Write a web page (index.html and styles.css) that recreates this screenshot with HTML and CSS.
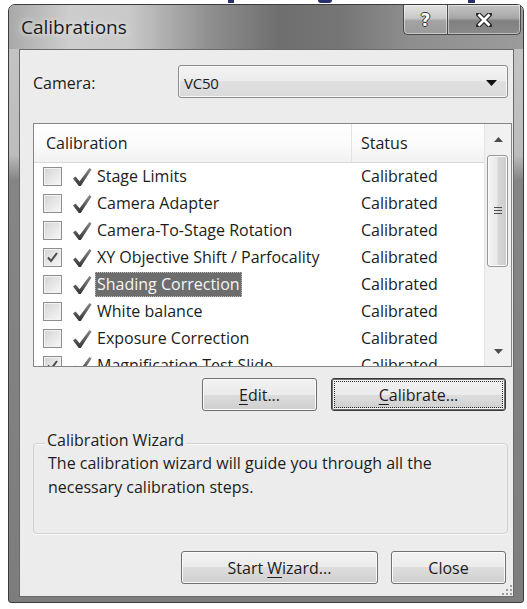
FILE: index.html
```html
<!DOCTYPE html>
<html lang="en">
<head>
<meta charset="utf-8">
<title>Calibrations</title>
<link rel="stylesheet" href="styles.css">
</head>
<body>
<div class="banner"><i class="m m1"></i><i class="m m2"></i><i class="m m3"></i></div>

<div class="window">
  <div class="titlebar">
    <span class="title">Calibrations</span>
    <div class="caption-btns">
      <span class="cb help">?</span>
      <span class="cb close">
        <svg width="16" height="14" viewBox="0 0 16 14"><path d="M2 1 L14 13 M14 1 L2 13" stroke="#2c2c2c" stroke-width="5" stroke-linecap="square"/><path d="M2.5 1.5 L13.5 12.5 M13.5 1.5 L2.5 12.5" stroke="#fff" stroke-width="2.6"/></svg>
      </span>
    </div>
  </div>

  <div class="client">
    <div class="camera-row">
      <span class="label">Camera:</span>
      <div class="combo">
        <span class="combo-text">VC50</span>
        <svg class="combo-arrow" width="11" height="6" viewBox="0 0 11 6"><path d="M0 0 H11 L5.5 6 Z" fill="#111"/></svg>
      </div>
    </div>

    <div class="list">
      <div class="list-main">
        <div class="list-head">
          <div class="hcell hcal">Calibration</div>
          <div class="hcell hstatus">Status</div>
        </div>
        <div class="rows">
          <div class="row">
            <div class="cell cal"><span class="box"></span><svg class="tick" viewBox="0 0 20 20"><use href="#tick"/></svg><span class="name">Stage Limits</span></div>
            <div class="cell status">Calibrated</div>
          </div>
          <div class="row">
            <div class="cell cal"><span class="box"></span><svg class="tick" viewBox="0 0 20 20"><use href="#tick"/></svg><span class="name">Camera Adapter</span></div>
            <div class="cell status">Calibrated</div>
          </div>
          <div class="row">
            <div class="cell cal"><span class="box"></span><svg class="tick" viewBox="0 0 20 20"><use href="#tick"/></svg><span class="name">Camera-To-Stage Rotation</span></div>
            <div class="cell status">Calibrated</div>
          </div>
          <div class="row">
            <div class="cell cal"><span class="box checked"><svg viewBox="0 0 13 13"><path d="M2 6.5 L5 10 L11 2" fill="none" stroke="#4a4a4a" stroke-width="2"/></svg></span><svg class="tick" viewBox="0 0 20 20"><use href="#tick"/></svg><span class="name">XY Objective Shift / Parfocality</span></div>
            <div class="cell status">Calibrated</div>
          </div>
          <div class="row">
            <div class="cell cal"><span class="box"></span><svg class="tick" viewBox="0 0 20 20"><use href="#tick"/></svg><span class="name selected">Shading Correction</span></div>
            <div class="cell status">Calibrated</div>
          </div>
          <div class="row">
            <div class="cell cal"><span class="box"></span><svg class="tick" viewBox="0 0 20 20"><use href="#tick"/></svg><span class="name">White balance</span></div>
            <div class="cell status">Calibrated</div>
          </div>
          <div class="row">
            <div class="cell cal"><span class="box"></span><svg class="tick" viewBox="0 0 20 20"><use href="#tick"/></svg><span class="name">Exposure Correction</span></div>
            <div class="cell status">Calibrated</div>
          </div>
          <div class="row">
            <div class="cell cal"><span class="box checked"><svg viewBox="0 0 13 13"><path d="M2 6.5 L5 10 L11 2" fill="none" stroke="#4a4a4a" stroke-width="2"/></svg></span><svg class="tick" viewBox="0 0 20 20"><use href="#tick"/></svg><span class="name">Magnification Test Slide</span></div>
            <div class="cell status">Calibrated</div>
          </div>
        </div>
      </div>
      <div class="vscroll">
        <div class="sb-arrow"><svg width="9" height="5" viewBox="0 0 9 5"><path d="M0 5 L4.5 0 L9 5 Z" fill="#4d4d4d"/></svg></div>
        <div class="sb-track">
          <div class="sb-thumb"><span class="grip-lines"></span></div>
        </div>
        <div class="sb-arrow"><svg width="9" height="5" viewBox="0 0 9 5"><path d="M0 0 L9 0 L4.5 5 Z" fill="#4d4d4d"/></svg></div>
      </div>
    </div>

    <div class="btn-row">
      <button class="btn w-small"><span class="btn-face"><u>E</u>dit...</span></button>
      <button class="btn default w-wide"><span class="btn-face focus"><u>C</u>alibrate...</span></button>
    </div>

    <div class="group">
      <span class="group-title">Calibration Wizard</span>
      <p class="group-text">The calibration wizard will guide you through all the necessary calibration steps.</p>
    </div>

    <div class="btn-row bottom">
      <button class="btn w-wizard"><span class="btn-face">Start <u>W</u>izard...</span></button>
      <button class="btn w-small"><span class="btn-face">Close</span></button>
    </div>

    <svg class="size-grip" width="10" height="10" viewBox="0 0 10 10">
      <g fill="#9a9a9a">
        <rect x="8" y="0" width="2" height="2"/>
        <rect x="4" y="4" width="2" height="2"/><rect x="8" y="4" width="2" height="2"/>
        <rect x="0" y="8" width="2" height="2"/><rect x="4" y="8" width="2" height="2"/><rect x="8" y="8" width="2" height="2"/>
      </g>
    </svg>
  </div>
</div>

<svg width="0" height="0" class="defs">
  <defs>
    <linearGradient id="tickfill" x1="0" y1="0" x2="0" y2="1">
      <stop offset="0" stop-color="#8a8a8a"/>
      <stop offset="1" stop-color="#333"/>
    </linearGradient>
    <symbol id="tick" viewBox="0 0 20 20">
      <path d="M1 11.5 L3.6 9.6 L7.6 14.2 L17.4 1 L19.6 2.4 L8.8 19 L6.8 19 Z" fill="url(#tickfill)"/>
    </symbol>
  </defs>
</svg>
</body>
</html>
```

FILE: styles.css
```css
* { box-sizing: border-box; }

html, body { margin: 0; padding: 0; }

body {
  width: 527px;
  height: 609px;
  overflow: hidden;
  background: #fff;
  font-family: "Open Sans", "Noto Sans", sans-serif;
  font-size: 16px;
  color: #1c1c1c;
}

.defs { position: absolute; }

/* clipped caption line above the window */
.banner {
  height: 4px;
  display: flex;
  align-items: flex-start;
}
.m { display: block; height: 3px; background: #27306a; }
.m1 { margin-left: 228px; width: 6px; }
.m2 { margin-left: 84px; width: 14px; border-radius: 0 0 7px 7px; }
.m3 { margin-left: 136px; width: 7px; }

/* window frame */
.window {
  margin-left: 8px;
  width: 516px;
  height: 599px;
  border: 1px solid #3c3c3c;
  border-radius: 7px 7px 3px 3px;
  padding: 0 9px 5px 10px;
  background:
    linear-gradient(180deg, #c6c6c6 0, #bcbcbc 150px, #858585 175px, #7d7d7d 100%);
  display: flex;
  flex-direction: column;
}

.titlebar {
  margin: 0 -9px 0 -10px;
  padding: 0 2px 0 12px;
  height: 44px;
  display: flex;
  align-items: flex-start;
  border-radius: 6px 6px 0 0;
  background:
    linear-gradient(90deg, #a9a9a9 0, #cdcdcd 60px, #c9c9c9 120px, #8f8f8f 200px, #6f6f6f 270px, #757575 330px, #8e8e8e 400px, #9b9b9b 100%);
}

.title {
  margin-top: 9px;
  font-size: 19px;
  line-height: 26px;
  color: #1a1a1a;
  text-shadow: 0 0 8px #e8e8e8, 0 0 4px #e0e0e0;
}

.caption-btns {
  margin-left: auto;
  display: flex;
  height: 30px;
}

.cb {
  display: flex;
  align-items: center;
  justify-content: center;
  height: 30px;
  border: 1px solid #4a4a4a;
  border-top: none;
  background: linear-gradient(180deg, #e2e2e2 0, #c9c9c9 45%, #a2a2a2 55%, #9c9c9c 100%);
  box-shadow: inset 0 0 0 1px rgba(255,255,255,0.45);
}
.help {
  width: 44px;
  border-radius: 0 0 0 5px;
  border-right: none;
  font-family: "DejaVu Sans", sans-serif;
  font-weight: bold;
  font-size: 17px;
  color: #fff;
  text-shadow: 1px 0 0 #333, -1px 0 0 #333, 0 1px 0 #333, 0 -1px 0 #333;
}
.close {
  width: 74px;
  border-radius: 0 0 5px 0;
  background: linear-gradient(180deg, #c4c4c4 0, #a7a7a7 45%, #818181 55%, #8a8a8a 100%);
}

/* client area */
.client {
  height: 548px;
  border: 1px solid #6a6a6a;
  background: #ececec;
  padding-left: 13px;
  display: flex;
  flex-direction: column;
}

.camera-row {
  margin-top: 15px;
  height: 33px;
  display: grid;
  grid-template-columns: 145px 330px;
  align-items: center;
}
.label { padding-top: 2px; }

.combo {
  height: 33px;
  border: 1px solid #8c8c8c;
  border-radius: 3px;
  background: linear-gradient(180deg, #f3f3f3 0, #ececec 50%, #e0e0e0 50%, #dadada 100%);
  box-shadow: inset 0 0 0 1px #f8f8f8;
  display: flex;
  align-items: center;
  padding: 2px 10px 0 5px;
}
.combo-text { font-size: 15px; letter-spacing: -0.2px; }
.combo-arrow { margin-left: auto; }

/* calibration list */
.list {
  margin-top: 25px;
  width: 479px;
  height: 244px;
  border: 1px solid #858585;
  background: #fff;
  display: flex;
  overflow: hidden;
}
.list-main { flex: 1; min-width: 0; }

.list-head {
  height: 39px;
  display: grid;
  grid-template-columns: 317px 1fr;
  border-bottom: 1px solid #d9d9d9;
  background: linear-gradient(180deg, #ffffff 0, #fbfbfb 50%, #f2f2f2 100%);
}
.hcell { line-height: 38px; }
.hcal { padding-left: 12px; }
.hstatus { padding-left: 9px; border-left: 1px solid #e2e2e2; }

.row {
  height: 27px;
  display: grid;
  grid-template-columns: 317px 1fr;
  align-items: center;
}
.cell { line-height: 27px; white-space: nowrap; }
.cal { display: flex; align-items: center; padding-left: 9px; }
.status { padding-left: 10px; }

.box {
  width: 19px;
  height: 19px;
  border: 1px solid #8e8e8e;
  background: linear-gradient(135deg, #d3d3d3 0, #e6e6e6 50%, #f7f7f7 100%);
  box-shadow: inset 0 0 0 1px #f2f2f2;
  display: flex;
  align-items: center;
  justify-content: center;
}
.box svg { width: 13px; height: 13px; }

.tick { width: 20px; height: 20px; margin-left: 10px; }
.name { margin-left: 5px; }
.name.selected {
  margin-left: 3px;
  padding: 0 2px;
  line-height: 25px;
  background: #6d6d6d;
  color: #f5f5f5;
  outline: 1px dotted #bdbdbd;
  outline-offset: -1px;
}

.vscroll {
  width: 27px;
  background: #f1f1f1;
  border-left: 1px solid #e4e4e4;
  display: flex;
  flex-direction: column;
}
.sb-arrow {
  height: 30px;
  display: flex;
  align-items: center;
  justify-content: center;
}
.sb-track { flex: 1; padding: 1px 3px 0 2px; }
.sb-thumb {
  height: 112px;
  border: 1px solid #979797;
  border-radius: 3px;
  background: linear-gradient(90deg, #f4f4f4 0, #e9e9e9 45%, #d6d6d6 55%, #cdcdcd 100%);
  box-shadow: inset 0 0 0 1px #fafafa;
  display: flex;
  align-items: center;
  justify-content: center;
}
.grip-lines {
  width: 8px;
  height: 8px;
  background: repeating-linear-gradient(180deg, #4e4e4e 0 1px, transparent 1px 3px);
}

/* push buttons */
.btn-row {
  display: flex;
  justify-content: flex-end;
  gap: 14px;
  padding-right: 7px;
  margin-top: 11px;
}
.btn-row.bottom { margin-top: 17px; gap: 13px; }

.btn {
  height: 33px;
  padding: 2px;
  border: 1px solid #707070;
  border-radius: 3px;
  background: linear-gradient(180deg, #f2f2f2 0, #ebebeb 50%, #dddddd 50%, #cfcfcf 100%);
  box-shadow: inset 0 0 0 1px #fbfbfb;
  font: inherit;
  color: #1c1c1c;
  display: flex;
}
.btn.default {
  border-color: #3a3a3a;
  box-shadow: inset 0 0 0 1px #6f6f6f, inset 0 0 0 2px #f4f4f4;
}
.btn-face {
  flex: 1;
  display: block;
  text-align: center;
  line-height: 28px;
  white-space: nowrap;
}
.btn-face.focus { border: 1px dotted #2a2a2a; line-height: 26px; }
.btn u { text-underline-offset: 3px; }

.w-small { width: 115px; }
.w-wide { width: 175px; }
.w-wizard { width: 197px; }

/* wizard group box */
.group {
  margin-top: 32px;
  width: 475px;
  height: 91px;
  border: 1px solid #d2d2d2;
  border-radius: 4px;
  box-shadow: 0 1px 0 #fafafa, inset 0 1px 0 #fafafa;
  padding-left: 14px;
}
.group-title {
  display: table;
  margin: -15px 0 0 -3px;
  padding: 0 2px;
  line-height: 22px;
  background: #ececec;
}
.group-text {
  margin: 0;
  width: 440px;
  line-height: 24px;
}

.size-grip {
  align-self: flex-end;
  margin: 1px 1px 0 0;
}
```
